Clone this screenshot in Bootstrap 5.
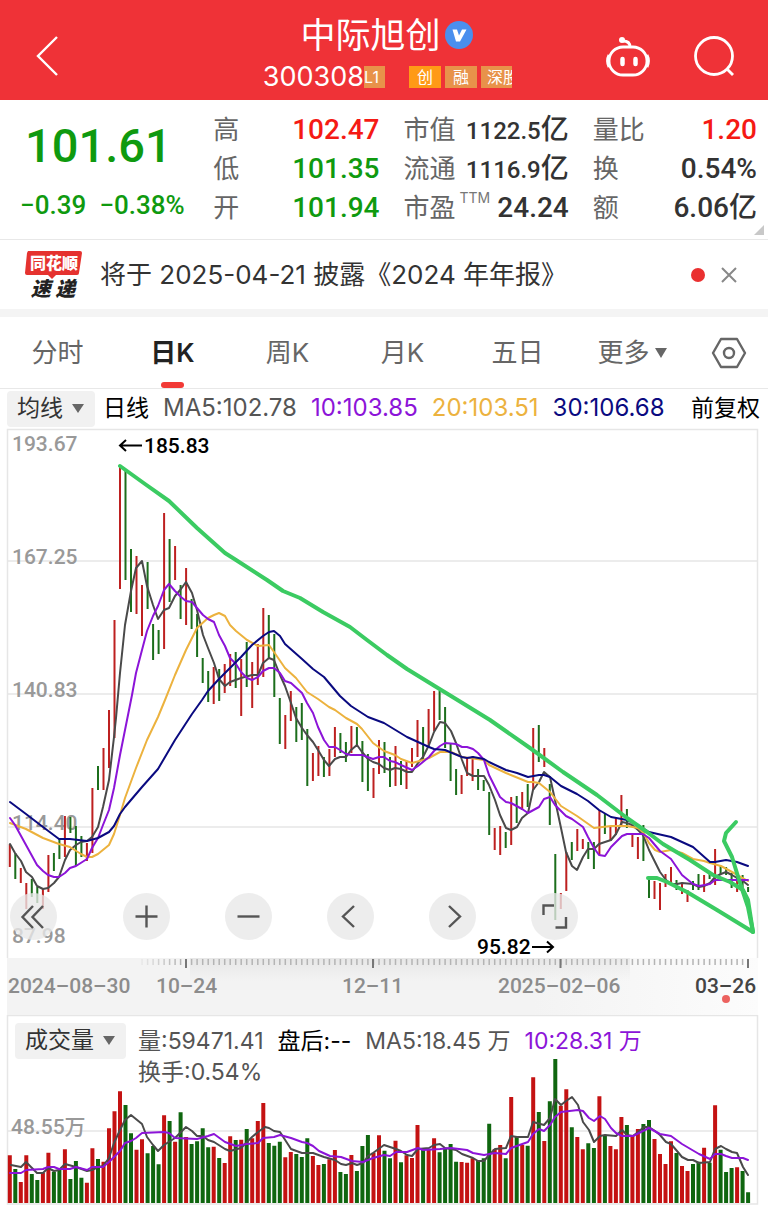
<!DOCTYPE html>
<html lang="zh-CN">
<head>
<meta charset="utf-8">
<meta name="viewport" content="width=device-width, initial-scale=1">
<title>中际旭创 300308</title>
<link href="https://cdn.jsdelivr.net/npm/bootstrap@5.3.0/dist/css/bootstrap.min.css" rel="stylesheet">
<style>
body{font-family:Inter,"Noto Sans CJK SC",sans-serif;background:#fff;color:#333;line-height:1.2;overflow-x:hidden}
button{border:0;background:none;padding:0;color:inherit;line-height:inherit}
svg{display:block}
.din{font-family:Roboto,"Noto Sans CJK SC",sans-serif;font-weight:500}
.topbar{background:#ef3237;color:#fff;height:100px}
.topbar-side{padding-top:12px}
.topbar-end{flex:0 0 33.333%}
.stock-name{font-size:35px;line-height:42px;font-weight:400}
.stock-code{font-size:27px;line-height:34px}
.tag{width:32px;height:22px;line-height:22px;font-size:16px;text-align:center;background:#e8924a;white-space:nowrap;overflow:hidden}
.tag-hot{background:#ff9a16}
.tag-level{width:21px;direction:rtl;padding-right:6px;font-size:16px}
.tag-cut{width:31px;padding-left:6px;text-align:left}
.quote{display:grid;grid-template-columns:169fr 166fr 165fr 164fr;column-gap:24px;padding:10px 11px 11px 20px;border-bottom:1px solid #e8e8e8}
.quote dl{margin:0}
.quote dl div{display:flex;justify-content:space-between;align-items:center;height:39px;white-space:nowrap}
.quote dt{font-weight:400;font-size:26px;color:#666}
.quote dd{margin:0;font-size:28px}
.quote .mid{font-size:24px}
.quote .unit{font-size:28px}
.price{font-size:47px;line-height:72px;padding-left:5px}
.change{font-size:26px;line-height:46px;white-space:nowrap}
.up{color:#f51a14}
.down{color:#0f9a0f}
.ttm{font-size:14px;color:#777;top:-14px}
.fold{right:4px;bottom:4px}
.news{height:69px;font-size:26px;padding-left:24px;padding-right:31px}
.strip{height:8px;background:#f4f4f4}
.dot{width:14px;height:14px;background:#ea3030}
.tabs{height:72px;border-bottom:1px solid #e8e8e8;font-size:26px;color:#666}
.tabs button{flex:115 1 0}
.tabs .gear{flex:78 1 0}
.tabs .on{color:#222;font-weight:600}
.tabs .on::after{content:"";position:absolute;left:50%;bottom:0;width:23px;height:6px;margin-left:-12px;border-radius:3px;background:#f23a36}
.legend-row{height:39px;font-size:23px;gap:14px;padding:0 8px 0 7px;white-space:nowrap}
.ma{font-size:24px}
.pick{background:#f1f1f1;border-radius:4px;height:36px;padding:0 10px;font-size:23px;color:#333}
.c10{color:#8c14d8}.c20{color:#ecb23e}.c30{color:#0a0a80}.c5{color:#555}
.tools{left:10px;bottom:18px;gap:55px}
.tools button{width:47px;height:47px;border-radius:50%;background:rgba(232,232,232,.78)}
.tools button:first-child{margin-right:11px}
.vol-head{left:15px;top:8px;font-size:23px;white-space:nowrap}
.vol-head .line{line-height:36px;gap:14px}
.axis-label{font:500 21px Roboto,"Noto Sans CJK SC",sans-serif;fill:#999}
.date-label{font:500 21px Roboto,sans-serif;fill:#8c8c8c}
.date-now{fill:#444}
.mark-label{font:500 21px Roboto,sans-serif;fill:#000}
.ln{fill:none;stroke-width:2;stroke-linejoin:round;stroke-linecap:round}
.pen{fill:none;stroke:#3bcb62;stroke-width:4;stroke-linejoin:round;stroke-linecap:round}
</style>
</head>
<body>
<header class="topbar d-flex align-items-center">
  <div class="topbar-side flex-fill"><button class="d-block ms-4 ps-2" aria-label="返回"><svg width="30" height="44" viewBox="0 0 30 44" fill="none" stroke="#fff" stroke-width="2.4"><path d="M25 3 6 22l19 19"/></svg></button></div>
  <div class="d-flex flex-column align-items-center pt-2">
    <h1 class="stock-name m-0 d-flex align-items-center">中际旭创
      <svg class="ms-1" width="30" height="30" viewBox="0 0 30 30"><circle cx="15" cy="15" r="14" fill="#4a8fee"/><path d="M8.500 9.500h4.500l2 6 3-6h4.500l-6.500 12h-4z" fill="#fff"/></svg></h1>
    <div class="d-flex align-items-center stock-code mt-1"><span>300308</span><span class="tag tag-level">L1</span>
      <span class="tag tag-hot ms-4">创</span><span class="tag ms-1">融</span><span class="tag tag-cut ms-1">深股</span></div>
  </div>
  <div class="topbar-side topbar-end d-flex justify-content-end align-items-center pe-4">
    <button aria-label="助手" class="me-3"><svg width="48" height="44" viewBox="0 0 48 44" fill="none" stroke="#fff" stroke-width="2.800"><rect x="5" y="13" width="38" height="28" rx="14"/><path d="M5 21q-3 6 0 12M43 21q3 6 0 12M26 13q0-6-7-6"/><circle cx="18" cy="6" r="3" fill="#fff" stroke="none"/><path d="M18.500 25v5M31.500 25v5" stroke-width="4.500" stroke-linecap="round"/></svg></button>
    <button aria-label="搜索" class="ms-4 me-2"><svg width="44" height="44" viewBox="0 0 44 44" fill="none" stroke="#fff" stroke-width="2.800"><circle cx="22" cy="22" r="18.500"/><path d="m35 35 6 6"/></svg></button>
  </div>
</header>

<section class="quote position-relative">
  <div class="down din"><div class="price">101.61</div><div class="change">−0.39&ensp;−0.38%</div></div>
  <dl><div><dt>高</dt><dd class="din up">102.47</dd></div><div><dt>低</dt><dd class="din down">101.35</dd></div><div><dt>开</dt><dd class="din down">101.94</dd></div></dl>
  <dl><div><dt>市值</dt><dd class="din mid">1122.5<span class="unit">亿</span></dd></div><div><dt>流通</dt><dd class="din mid">1116.9<span class="unit">亿</span></dd></div><div><dt>市盈<sup class="ttm ms-1">TTM</sup></dt><dd class="din">24.24</dd></div></dl>
  <dl><div><dt>量比</dt><dd class="din up">1.20</dd></div><div><dt>换</dt><dd class="din">0.54%</dd></div><div><dt>额</dt><dd class="din">6.06亿</dd></div></dl>
  <svg class="fold position-absolute" width="10" height="10"><path d="M10 0v10H0z" fill="#c8c8c8"/></svg>
</section>

<section class="news d-flex align-items-center">
  <svg width="60" height="52" viewBox="0 0 60 52"><path d="M4 2h52q2 0 2 2l-3 20q0 2-2 2H32l-4 4-4-4H3q-2 0-2-2L3 4z" fill="#e5322f"/><g font-family="Noto Sans CJK SC" font-weight="900" text-anchor="middle"><text x="30" y="20" font-size="16" fill="#fff">同花顺</text><text x="29" y="47" font-size="20" font-style="italic" fill="#222">速 递</text></g></svg>
  <a href="#" class="text-reset text-decoration-none ms-3 text-nowrap">将于 2025-04-21 披露《2024 年年报》</a>
  <span class="dot rounded-circle ms-auto"></span>
  <button class="ms-3" aria-label="关闭"><svg width="16" height="16" stroke="#888" stroke-width="2"><path d="m1 1 14 14M15 1 1 15"/></svg></button>
</section>
<div class="strip"></div>

<nav class="tabs d-flex">
  <button>分时</button><button class="on position-relative">日K</button><button>周K</button><button>月K</button><button>五日</button>
  <button class="text-nowrap">更多<svg class="d-inline-block ms-1" width="14" height="16"><path d="M1 1h12L7 11z" fill="#666"/></svg></button>
  <button class="gear d-flex align-items-center justify-content-center" aria-label="设置"><svg width="36" height="32" viewBox="0 0 36 32" fill="none" stroke="#666" stroke-width="2.400" stroke-linejoin="round"><path d="M10 2h16l8 14-8 14H10L2 16z"/><circle cx="18" cy="16" r="5"/></svg></button>
</nav>

<div class="legend-row d-flex align-items-center">
  <div class="d-flex align-items-center gap-2"><button class="pick">均线<svg class="d-inline-block ms-2" width="14" height="15"><path d="M1 2h12L7 11z" fill="#666"/></svg></button><span class="text-black">日线</span></div>
  <span class="ma c5">MA5:102.78</span><span class="ma c10">10:103.85</span><span class="ma c20">20:103.51</span><span class="ma c30">30:106.68</span><span class="text-black ms-auto">前复权</span>
</div>

<main>
  <div class="position-relative">
    <svg width="100%" viewBox="0 428 768 530" role="img" aria-label="日K线图">
      <path d="M7.500 958V429.500H757.500V958M8 561H757M8 694H757M8 827H757" fill="none" stroke="#e6e6e6" stroke-width="1.500"/>
      <g class="axis-label"><text x="12" y="451">193.67</text><text x="12" y="564">167.25</text><text x="12" y="697">140.83</text><text x="12" y="830">114.40</text><text x="12" y="943">87.98</text></g>
      <path id="kUp" stroke="#bd2020" stroke-width="2"/><path id="kDown" stroke="#1c6e1c" stroke-width="2"/>
      <polyline class="ln" stroke="#4a4a4a" points="10,844 15,853 21,861 26,872 32,877 37,886 43,889 48,888 54,883 59,877 65,860 70,850 76,845 81,842 87,841 92,837 98,827 103,807 109,780 114,737 116,718 120,673 125,625 131,591 136,568 142,561 147,586 153,605 158,619 164,610 169,608 175,596 181,589 186,582 192,593 197,610 203,635 208,648 214,663 219,679 225,686 230,682 241,678 252,675 258,675 263,663 269,658 274,660 280,675 285,686 291,703 296,718 302,728 307,735 313,742 318,750 324,760 329,766 335,759 340,757 346,757 351,750 357,745 362,752 368,759 373,762 379,764 384,768 390,770 395,768 401,769 407,772 412,772 418,763 423,757 429,745 434,732 440,722 445,723 451,731 456,743 462,760 467,773 473,776 484,776 489,785 495,800 500,815 506,828 511,830 517,827 522,818 528,813 533,790 539,782 544,772 550,777 555,800 561,828 566,852 572,866 577,870 583,857 588,849 594,849 599,844 605,842 611,840 616,834 622,822 627,823 632,825 638,830 643,835 649,850 660,872 666,880 671,884 677,884 682,883 693,884 699,887 704,886 710,883 715,877 721,874 726,872 732,875 737,878 743,881 748,885"/>
      <polyline class="ln" stroke="#ecb23e" points="10,823 26,829 43,838 59,844 70,847 81,854 87,857 92,857 98,854 109,845 114,834 120,815 125,798 136,768 147,740 158,717 165,700 175,675 186,650 197,628 208,618 214,615 219,613 225,616 230,625 236,631 247,640 258,646 269,645 274,652 285,668 296,678 307,692 318,699 329,707 335,710 346,718 357,724 362,729 373,743 384,751 395,755 401,759 412,763 423,760 429,758 440,752 451,752 462,757 484,760 489,765 506,773 528,782 533,782 539,783 550,792 561,806 577,816 594,828 611,826 627,826 638,828 643,832 649,843 655,850 660,852 671,850 682,853 693,859 704,861 710,863 721,866 732,872 748,881"/>
      <polyline class="ln" stroke="#8c14d8" points="10,818 15,825 26,845 37,865 43,871 48,875 54,877 59,877 65,873 70,868 76,866 87,859 92,848 98,838 103,825 109,810 114,788 120,755 125,730 132,695 136,673 142,650 147,631 153,616 158,606 164,590 169,584 175,591 181,597 186,601 192,602 197,608 203,615 208,619 214,622 219,635 225,646 230,658 236,664 241,672 247,678 252,680 258,677 263,671 269,668 274,668 280,673 285,681 291,683 302,693 307,703 313,713 318,727 324,740 329,747 335,747 340,750 346,754 351,755 362,755 373,759 379,757 384,757 390,761 395,762 401,765 412,770 418,766 429,757 434,751 440,746 445,743 456,744 462,747 467,747 473,749 478,753 484,760 489,775 495,787 500,797 506,802 511,803 522,809 528,813 539,807 544,799 550,797 555,805 566,816 572,819 583,827 588,837 594,848 599,855 605,856 611,847 616,842 622,836 627,834 643,834 649,838 660,851 671,859 682,875 693,884 699,886 710,884 715,880 748,880"/>
      <polyline class="ln" stroke="#0a0a80" points="10,802 26,814 43,827 59,839 70,839 87,841 98,838 109,832 114,826 120,814 125,807 142,787 158,769 175,740 192,714 202,700 208,691 219,679 230,668 241,657 252,645 263,636 269,632 274,631 280,636 285,644 302,659 313,669 324,677 340,696 351,706 368,717 384,723 407,737 429,747 434,749 445,750 462,757 467,758 473,757 484,759 489,762 506,770 517,773 528,777 539,775 544,775 550,777 561,786 577,794 588,801 599,810 611,817 627,820 638,825 649,832 671,837 693,847 710,862 715,862 726,860 737,862 748,866"/>
      <polyline class="pen" points="120,466 145,484 169,501 197,528 225,553 236,560 267,580 283,591 300,598 323,612 350,627 367,640 387,655 407,669 433,685 451,696 490,720 530,748 563,772 597,795 627,818 647,832 663,844 690,860 713,875 730,882 743,890 748,900 753,932 717,910 687,892 667,882 657,878 648,878"/>
      <polyline class="pen" points="736,822 726,833 724,841 732,857 740,883 748,907 753,932"/>
      <g class="mark-label"><text x="144" y="453">185.83</text><text x="477" y="954">95.82</text></g>
      <path d="M142 445.500H121M126 440l-6 5.500 6 5.500M532 947h20M547 941.500l6 5.500-6 5.500" fill="none" stroke="#000" stroke-width="2"/>
    </svg>
    <div class="tools position-absolute d-flex">
      <button aria-label="最左"><svg width="47" height="47" fill="none" stroke="#555" stroke-width="2.400"><path d="M23 13 12.500 24 23 35M33 13 22.500 24 33 35"/></svg></button>
      <button aria-label="放大"><svg width="47" height="47" stroke="#555" stroke-width="2.400"><path d="M12.500 23.500h22M23.500 12.500v22"/></svg></button>
      <button aria-label="缩小"><svg width="47" height="47" stroke="#555" stroke-width="2.400"><path d="M12.500 23.500h22"/></svg></button>
      <button aria-label="左移"><svg width="47" height="47" fill="none" stroke="#555" stroke-width="2.400"><path d="M27 13 16 23.500 27 34"/></svg></button>
      <button aria-label="右移"><svg width="47" height="47" fill="none" stroke="#555" stroke-width="2.400"><path d="M20 13l11 10.500L20 34"/></svg></button>
      <button aria-label="全屏"><svg width="47" height="47" fill="none" stroke="#555" stroke-width="2.400"><path d="M12.500 22V12.500H23M35 24v10.500H24.500"/></svg></button>
    </div>
  </div>

  <svg width="100%" viewBox="0 958 768 57" role="img" aria-label="日期轴">
    <defs><linearGradient id="band" x1="0" y1="0" x2="1" y2="0"><stop offset="0" stop-color="#f3f3f3"/><stop offset=".7" stop-color="#f3f3f3"/><stop offset="1" stop-color="#fcfcfc"/></linearGradient>
    <linearGradient id="shade" x1="0" y1="0" x2="0" y2="1"><stop offset="0" stop-color="#000" stop-opacity=".05"/><stop offset="1" stop-color="#000" stop-opacity="0"/></linearGradient>
    <linearGradient id="tickFade" gradientUnits="userSpaceOnUse" x1="138" y1="0" x2="180" y2="0"><stop offset="0" stop-color="#b4b4b4" stop-opacity=".1"/><stop offset="1" stop-color="#b4b4b4"/></linearGradient></defs>
    <rect x="7" y="958" width="751" height="57" fill="url(#band)"/>
    <rect x="190" y="958" width="440" height="24" fill="url(#shade)"/>
    <path id="ticks" stroke="url(#tickFade)" stroke-width="1.500"/>
    <path d="M186 959v9M373 959v9M560.500 959v9M748 959v9" stroke="#777" stroke-width="2"/>
    <g class="date-label"><text x="8" y="993">2024–08–30</text><text x="156" y="993">10–24</text><text x="342" y="993">12–11</text><text x="498" y="993">2025–02–06</text><text class="date-now" x="695" y="993">03–26</text></g>
    <circle cx="726" cy="999" r="4" fill="#ec625f"/>
  </svg>

  <div class="position-relative">
    <svg width="100%" viewBox="0 1015 768 201" role="img" aria-label="成交量图">
      <path d="M7.500 1204V1015.500H757.500V1204zM8 1131H757" fill="none" stroke="#e6e6e6" stroke-width="1.500"/>
      <path id="vUp" stroke="#c41212" stroke-width="4"/><path id="vDown" stroke="#0f660f" stroke-width="4"/>
      <text class="axis-label" x="11" y="1134">48.55万</text>
      <polyline class="ln" stroke="#4a4a4a" points="11,1165 21,1167 26,1162 32,1168 37,1173 43,1173 48,1168 54,1171 59,1170 65,1164 76,1167 87,1171 92,1170 98,1167 103,1166 109,1158 114,1143 120,1130 125,1120 131,1115 142,1124 147,1137 153,1145 158,1151 164,1145 175,1138 186,1127 192,1131 197,1136 203,1136 208,1140 214,1142 225,1149 230,1151 241,1148 247,1142 252,1137 258,1132 265,1127 269,1128 274,1131 280,1132 291,1149 302,1153 313,1153 324,1157 335,1160 341,1164 346,1165 352,1163 357,1165 363,1163 368,1156 373,1153 384,1145 396,1149 401,1151 407,1155 412,1156 418,1149 429,1148 434,1145 440,1144 445,1148 451,1149 456,1150 462,1154 473,1158 478,1161 484,1161 489,1155 495,1149 506,1148 511,1136 517,1137 528,1137 533,1122 544,1125 550,1118 555,1099 561,1105 566,1101 572,1097 578,1105 583,1122 589,1130 594,1142 600,1136 605,1135 616,1136 622,1130 627,1135 633,1136 638,1132 644,1127 649,1127 655,1131 660,1135 666,1142 671,1144 677,1151 682,1157 688,1160 693,1160 699,1163 710,1162 715,1149 721,1146 726,1149 732,1152 737,1153 743,1167 748,1175"/>
      <polyline class="ln" stroke="#8c14d8" points="10,1173 21,1173 26,1170 43,1169 48,1167 54,1167 59,1169 70,1169 76,1167 87,1170 92,1167 103,1167 109,1162 120,1151 125,1143 131,1141 136,1138 142,1133 164,1132 169,1133 175,1138 197,1139 208,1136 214,1134 225,1142 236,1146 247,1144 258,1143 263,1138 274,1137 280,1135 291,1138 302,1142 307,1143 313,1146 319,1151 330,1156 341,1157 352,1161 363,1162 373,1158 384,1155 390,1156 396,1152 407,1152 418,1148 423,1150 440,1149 451,1148 467,1150 473,1153 484,1155 495,1153 506,1154 511,1148 528,1142 533,1134 539,1129 544,1131 550,1125 555,1117 561,1112 578,1110 583,1111 589,1118 594,1121 600,1116 605,1119 611,1128 616,1133 622,1136 633,1136 649,1128 660,1134 671,1136 682,1144 699,1154 710,1159 715,1154 721,1154 726,1156 732,1158 743,1158 748,1160"/>
    </svg>
    <div class="vol-head position-absolute d-flex align-items-start">
      <button class="pick">成交量<svg class="d-inline-block ms-2" width="14" height="15"><path d="M1 2h12L7 11z" fill="#666"/></svg></button>
      <div class="c5 ms-2 ps-1"><div class="line d-flex"><span>量:59471.41</span><span class="text-black">盘后:--</span><span>MA5:18.45 万</span><span class="c10">10:28.31 万</span></div><div>换手:0.54%</div></div>
    </div>
  </div>
</main>

<script>
// One entry per session: direction, then the top and bottom of the price bar.
const candles = `r844-867 g853-879 r868-883 r883-909 g879-897 g887-903 r888-909 r855-892 g853-871 g838-859 r816-857 g817-833 g826-866 g836-857 r843-861 r788-853 g766-790 r748-790 r710-768 r620-738
r467-589 g471-580 g549-612 r556-614 r585-636 g562-609 g624-660 g630-654 r513-649 g539-602 r546-580 g585-619 r568-625 g599-629 g614-657 g658-683 g671-702 r667-704 g669-701 r664-693
r654-686 g652-688 r659-716 g642-687 r662-708 r644-685 r608-677 g615-659 g634-697 g698-744 r715-749 r691-721 g707-742 g703-740 g729-786 r753-781 r746-776 g757-777 r749-776 r727-757
g733-753 g742-762 r726-753 g727-745 g741-782 g754-791 r768-798 r740-774 g742-773 g757-787 r746-786 g761-785 r761-789 r748-767 r720-757 g727-760 r709-747 r691-731 g691-720 g707-748
g744-781 g769-795 r775-794 r758-776 r756-781 g769-790 g780-791 g792-835 r828-850 r826-855 g832-848 r797-845 g796-823 r792-810 g784-807 r728-790 g725-762 r748-767 g784-825 g854-920
r893-909 r852-891 g842-860 r829-851 r839-849 g842-859 g842-869 r810-855 g813-834 r826-841 r817-835 r795-827 g809-828 r834-847 r837-859 g825-861 g878-898 r881-899 r883-910 r874-887
r867-884 g880-890 r883-894 r890-902 g881-890 g874-890 r875-892 g871-879 r849-885 g866-874 g867-875 g873-888 r878-892 g875-890 g887-892`.split(/\s+/);
// Height of each volume bar, in thirds of a unit, measured down from 1050.
const volumes = `r316 g357 r396 r316 g372 g390 r369 r308 g365 g360 r298 g387 g333 g383 r398 r295 g327 r335 r235 r184 r124 g165 g250 r299 r268 g310 g288 g343 r196 g213 r275 g187 r261 g282 g274 g235 g292 r290 g324 r339
r259 g270 r269 g237 r265 r213 r159 g279 g287 g275 r322 r306 g312 g321 g265 r318 r345 g342 r328 r300 g366 g372 r315 g363 g288 g255 r308 r256 g302 g325 r272 g337 r316 r324 r225 g300 r298 r265 g307 g295
g282 g335 r336 r338 r325 g330 g325 g221 r297 r285 g325 r141 g258 r285 g287 r82 g186 r273 g154 g27 r167 r118 g232 r261 r298 g280 g294 r139 g255 r288 r298 r201 g225 r255 r237 g222 g210 r267 r312 r342
r274 g309 r348 r363 g342 g335 r293 g338 r166 g299 g366 g354 r352 g363 g427`.split(/\s+/);
const x = i => (9.8 + 5.51 * i).toFixed(1);
const k = {r: '', g: ''}, v = {r: '', g: ''};
candles.forEach((c, i) => { const [a, b] = c.slice(1).split('-'); k[c[0]] += `M${x(i)} ${a}V${b}`; });
volumes.forEach((c, i) => { v[c[0]] += `M${x(i)} ${(1050 + c.slice(1) / 3).toFixed(1)}V1203`; });
let ticks = '';
for (let i = 24; i < 134; i++) ticks += `M${x(i)} 959v6`;
const set = (id, d) => document.getElementById(id).setAttribute('d', d);
set('kUp', k.r); set('kDown', k.g); set('vUp', v.r); set('vDown', v.g); set('ticks', ticks);
</script>
<script src="https://cdn.jsdelivr.net/npm/bootstrap@5.3.0/dist/js/bootstrap.bundle.min.js"></script>
</body>
</html>
